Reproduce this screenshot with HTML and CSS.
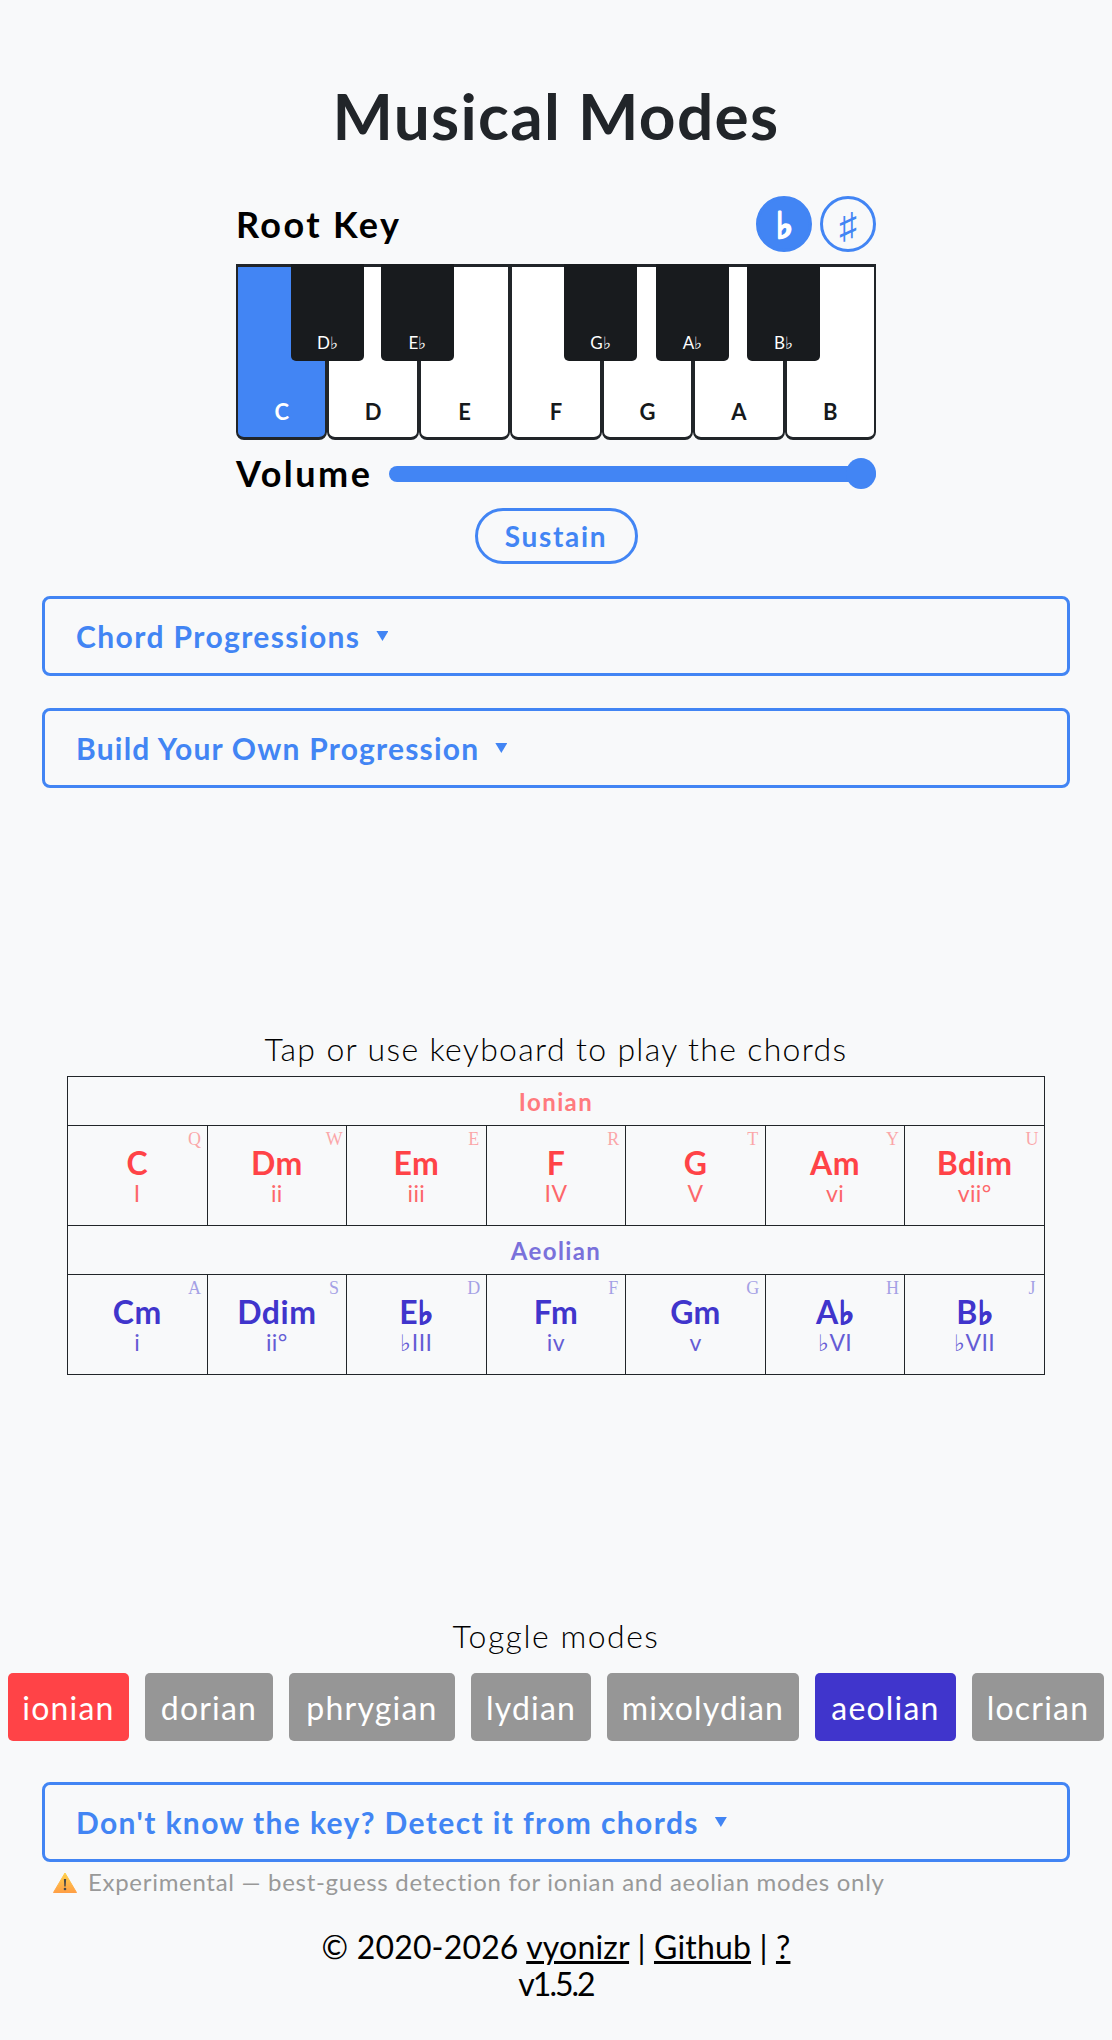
FILE: index.html
```html
<!DOCTYPE html>
<html>
<head>
<meta charset="utf-8">
<title>Musical Modes</title>
<link rel="stylesheet" href="styles.css">
</head>
<body>
<main class="app">
  <h1 class="title">Musical Modes</h1>

  <section class="keyboard">
    <div class="key-head">
      <h2 class="root-label">Root Key</h2>
      <div class="accidentals">
        <button class="acc acc-on">♭</button>
        <button class="acc">♯</button>
      </div>
    </div>
    <div class="piano">
      <div class="white white-on">C</div>
      <div class="white">D</div>
      <div class="white">E</div>
      <div class="white">F</div>
      <div class="white">G</div>
      <div class="white">A</div>
      <div class="white">B</div>
      <div class="black b1">D♭</div>
      <div class="black b2">E♭</div>
      <div class="black b4">G♭</div>
      <div class="black b5">A♭</div>
      <div class="black b6">B♭</div>
    </div>
    <div class="volume">
      <label class="volume-label" for="vol">Volume</label>
      <input id="vol" class="slider" type="range" min="0" max="100" value="100">
    </div>
    <button class="sustain">Sustain</button>
  </section>

  <details class="panel panel-first"><summary class="chord-sum">Chord Progressions</summary></details>
  <details class="panel panel-second"><summary class="build-sum">Build Your Own Progression</summary></details>

  <p class="prompt tap">Tap or use keyboard to play the chords</p>
  <table class="chords">
    <tr class="ionian"><th colspan="7">Ionian</th></tr>
    <tr class="ionian">
      <td><kbd>Q</kbd><b>C</b><i>I</i></td>
      <td><kbd>W</kbd><b>Dm</b><i>ii</i></td>
      <td><kbd>E</kbd><b>Em</b><i>iii</i></td>
      <td><kbd>R</kbd><b>F</b><i>IV</i></td>
      <td><kbd>T</kbd><b>G</b><i>V</i></td>
      <td><kbd>Y</kbd><b>Am</b><i>vi</i></td>
      <td><kbd>U</kbd><b>Bdim</b><i>vii°</i></td>
    </tr>
    <tr class="aeolian"><th colspan="7">Aeolian</th></tr>
    <tr class="aeolian">
      <td><kbd>A</kbd><b>Cm</b><i>i</i></td>
      <td><kbd>S</kbd><b>Ddim</b><i>ii°</i></td>
      <td><kbd>D</kbd><b>E<span class="flat">♭</span></b><i>♭III</i></td>
      <td><kbd>F</kbd><b>Fm</b><i>iv</i></td>
      <td><kbd>G</kbd><b>Gm</b><i>v</i></td>
      <td><kbd>H</kbd><b>A<span class="flat">♭</span></b><i>♭VI</i></td>
      <td><kbd>J</kbd><b>B<span class="flat">♭</span></b><i>♭VII</i></td>
    </tr>
  </table>

  <p class="prompt toggle">Toggle modes</p>
  <div class="modes">
    <button class="mode m-ionian on-ionian">ionian</button>
    <button class="mode m-dorian">dorian</button>
    <button class="mode m-phrygian">phrygian</button>
    <button class="mode m-lydian">lydian</button>
    <button class="mode m-mixolydian">mixolydian</button>
    <button class="mode m-aeolian on-aeolian">aeolian</button>
    <button class="mode m-locrian">locrian</button>
  </div>

  <details class="panel panel-detect"><summary class="detect-sum">Don't know the key? Detect it from chords</summary></details>
  <p class="note">
    <svg class="warn" viewBox="0 0 24 21" width="24" height="21" aria-hidden="true">
      <defs><linearGradient id="wg" x1="0" y1="0" x2="0" y2="1"><stop offset="0" stop-color="#ffd04a"/><stop offset="1" stop-color="#ff9f45"/></linearGradient></defs>
      <path d="M12 1 L23.5 20.5 H0.5 Z" fill="url(#wg)" stroke="url(#wg)" stroke-width="1" stroke-linejoin="round"/>
      <path d="M10.9 7 H13.1 L12.7 14.5 H11.3 Z" fill="#4a4a4a"/>
      <circle cx="12" cy="17" r="1.3" fill="#4a4a4a"/>
    </svg>
    <span class="note-text">Experimental — best-guess detection for ionian and aeolian modes only</span>
  </p>

  <footer class="foot">
    <div class="foot-line">© 2020-2026 <a href="#">vyonizr</a> | <a href="#">Github</a> | <a href="#">?</a></div>
    <div class="foot-line foot-version">v1.5.2</div>
  </footer>
</main>
</body>
</html>
```
FILE: styles.css
```css
* { box-sizing: border-box; }
html, body { margin: 0; padding: 0; }
body {
  background: #f8f9fa;
  color: #000;
  font-family: "Lato", sans-serif;
  height: 2040px;
  overflow: hidden;
}
.app { display: flex; flex-direction: column; align-items: stretch; }

.title {
  margin: 76px 0 0;
  font-size: 64px;
  line-height: 80px;
  font-weight: 700;
  color: #212529;
  text-align: center;
  letter-spacing: 1.3px;
}

.keyboard {
  width: 640px;
  margin: 40px auto 0;
  display: flex;
  flex-direction: column;
}
.key-head { display: flex; justify-content: space-between; align-items: center; height: 56px; }
.root-label { margin: 0; font-size: 36px; line-height: 56px; font-weight: 700; letter-spacing: 2.4px; }
.accidentals { display: flex; gap: 8px; }
.acc {
  width: 56px; height: 56px; padding: 0;
  border-radius: 50%;
  border: 3px solid #4285f4;
  background: transparent;
  color: #4285f4;
  font-family: inherit;
  font-size: 36px;
  line-height: 1;
}
.acc-on { background: #4285f4; color: #fff; font-weight: 700; -webkit-text-stroke: 1.4px #fff; }
.flat { -webkit-text-stroke: 1px currentColor; }

.piano { position: relative; display: flex; height: 176px; margin-top: 12px; }
.white {
  flex: 1 1 0;
  display: flex; align-items: flex-end; justify-content: center;
  padding-bottom: 12px;
  background: #fff;
  border: 3px solid #212529;
  border-left-width: 2px;
  border-right-width: 2px;
  border-radius: 0 0 8px 8px;
  font-size: 22px; line-height: 26px; font-weight: 700; color: #16191c;
}
.white-on { background: #4285f4; color: #fff; }
.black {
  position: absolute; top: 0;
  width: 73px; height: 97px;
  display: flex; align-items: flex-end; justify-content: center;
  padding-bottom: 7px;
  background: #181b1e;
  border-radius: 0 0 5px 5px;
  color: #fff;
  font-size: 17px; line-height: 22px; font-weight: 400;
}
.b1 { left: 55px; }
.b2 { left: 145px; }
.b4 { left: 328px; }
.b5 { left: 420px; }
.b6 { left: 511px; }

.volume { display: flex; align-items: center; gap: 17px; height: 31px; margin-top: 18px; }
.volume-label { font-size: 36px; line-height: 31px; font-weight: 700; letter-spacing: 2.5px; }
.slider {
  -webkit-appearance: none; appearance: none;
  flex: 1 1 0; min-width: 0; height: 31px; margin: 0;
  background: transparent;
}
.slider::-webkit-slider-runnable-track { height: 16px; background: #4285f4; border-radius: 8px; }
.slider::-webkit-slider-thumb {
  -webkit-appearance: none; appearance: none;
  width: 30px; height: 31px; margin-top: -7.5px;
  background: #4285f4; border: 0; border-radius: 50%;
}
.sustain {
  align-self: center;
  width: 163px; height: 56px; margin-top: 19px; padding: 0;
  border: 3px solid #4285f4; border-radius: 28px;
  background: transparent; color: #4285f4;
  font-family: inherit; font-size: 28px; font-weight: 700; letter-spacing: 1.7px;
}

.panel {
  height: 80px;
  margin: 0 42px;
  padding: 0 31px;
  border: 3px solid #4285f4;
  border-radius: 8px;
  color: #4285f4;
  display: flex; align-items: center;
}
.panel summary {
  list-style: none;
  display: flex; align-items: center; gap: 16px;
  font-size: 30px; line-height: 74px; font-weight: 700;
}
.panel summary::-webkit-details-marker { display: none; }
.panel summary::after {
  content: ""; width: 12px; height: 10px;
  background: #4285f4;
  clip-path: polygon(0 0, 100% 0, 50% 100%);
}
.panel-first { margin-top: 32px; }
.panel-second { margin-top: 32px; }
.panel-detect { margin-top: 41px; }
.chord-sum { letter-spacing: 1.4px; }
.build-sum { letter-spacing: 1.2px; }
.detect-sum { letter-spacing: 1.38px; }

.prompt { margin: 0; height: 40px; font-size: 32px; line-height: 40px; font-weight: 300; text-align: center; color: #000; }
.tap { margin-top: 241px; letter-spacing: 1.34px; }
.toggle { margin-top: 241px; letter-spacing: 1.5px; }

.chords {
  width: 978px; margin: 7px auto 0;
  table-layout: fixed; border-collapse: collapse;
}
.chords th, .chords td { border: 1px solid #212529; padding: 0; text-align: center; }
.chords th { height: 49px; font-size: 24px; font-weight: 700; letter-spacing: 1.4px; }
.chords td { position: relative; height: 100px; vertical-align: top; padding-top: 19px; }
.chords b { display: block; font-size: 32px; line-height: 36px; font-weight: 700; letter-spacing: 0.5px; }
.chords i { display: block; font-size: 23px; line-height: 24px; font-style: normal; font-weight: 400; opacity: 0.8; letter-spacing: 0.4px; }
.chords kbd {
  position: absolute; top: 2px; right: 6px; width: 12px;
  display: flex; justify-content: center;
  font-family: "Liberation Serif", serif; font-size: 18px; line-height: 22px; opacity: 0.45;
}
.ionian { color: #ff4347; }
.aeolian { color: #4035cc; }
.ionian th { color: #ff7a7e; }
.aeolian th { color: #7a71db; }

.modes { display: flex; justify-content: center; gap: 16px; margin-top: 17px; }
.mode {
  height: 68px; padding: 0;
  border: 0; border-radius: 5px;
  background: #969696; color: #fff;
  font-family: inherit; font-size: 32px; font-weight: 400; letter-spacing: 1.2px;
}
.m-ionian { width: 121px; }
.m-dorian { width: 128px; }
.m-phrygian { width: 166px; }
.m-lydian { width: 120px; }
.m-mixolydian { width: 192px; }
.m-aeolian { width: 141px; }
.m-locrian { width: 132px; }
.on-ionian { background: #ff4347; }
.on-aeolian { background: #4035cc; }

.note { display: flex; align-items: center; gap: 11px; height: 24px; margin: 8px 0 0 53px; }
.warn { flex: none; }
.note-text { font-size: 24px; line-height: 24px; font-weight: 400; color: #999; letter-spacing: 0.7px; }

.foot { margin-top: 34px; text-align: center; color: #000; }
.foot-line { font-size: 32px; line-height: 37px; font-weight: 400; letter-spacing: 0.17px; }
.foot-version { letter-spacing: -2px; }
.foot a { color: inherit; text-decoration: underline; }
```
